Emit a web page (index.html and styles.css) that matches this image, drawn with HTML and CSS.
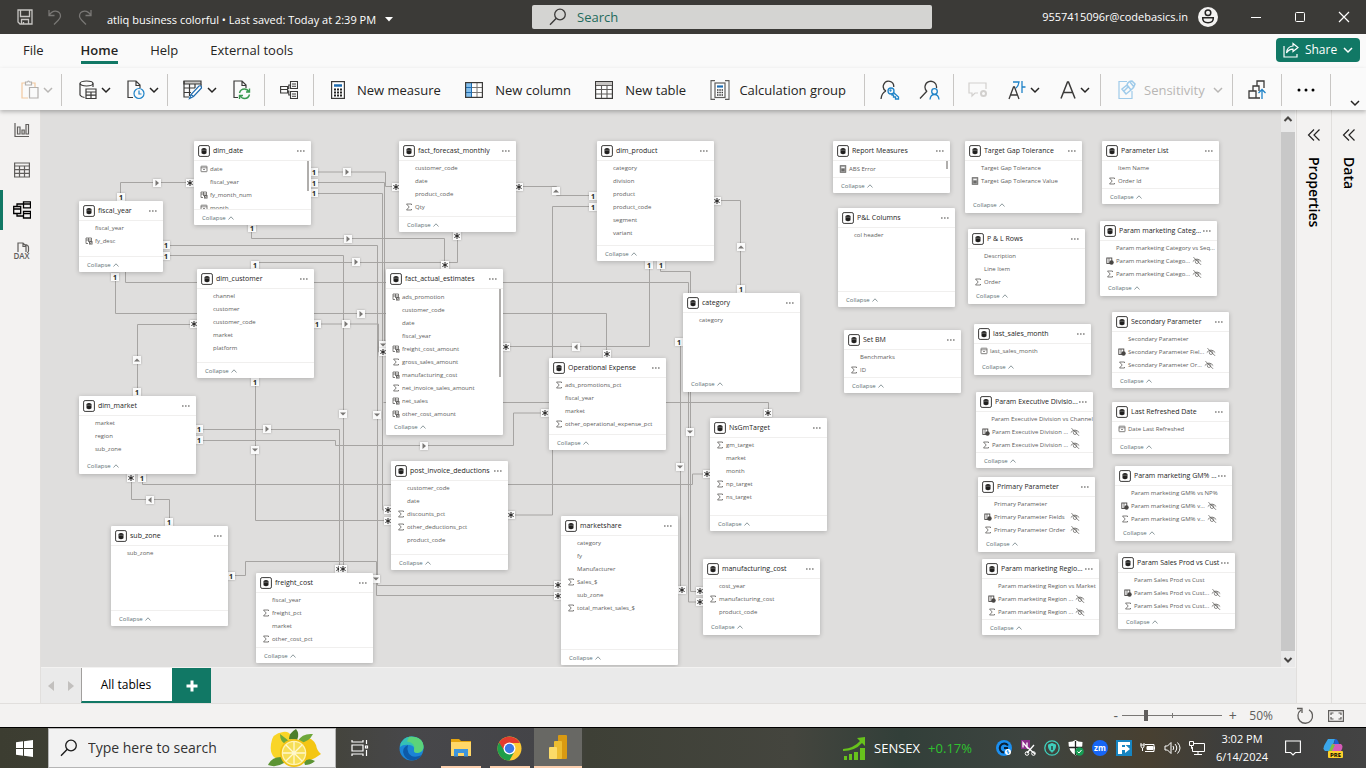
FILE: index.html
```html
<!DOCTYPE html>
<html lang="en">
<head>
<meta charset="utf-8">
<title>atliq business colorful</title>
<link rel="stylesheet" href="styles.css">
</head>
<body>
<svg class="defs" aria-hidden="true">
  <symbol id="chev" viewBox="0 0 10 10"><path d="M1 3l4 4 4-4" fill="none" stroke="currentColor" stroke-width="1.5"/></symbol>
  <symbol id="up" viewBox="0 0 6 6"><path d="M.5 4.500L3 1.800l2.500 2.700" fill="none" stroke="currentColor" stroke-width=".7"/></symbol>
  <symbol id="lens" viewBox="0 0 18 18"><circle cx="11" cy="6.500" r="5.300" fill="none" stroke="currentColor" stroke-width="1.300"/><path d="M7.300 10.300L1 16.700" stroke="currentColor" stroke-width="1.400"/></symbol>
  <symbol id="table" viewBox="0 0 12 12"><rect x=".6" y=".6" width="10.800" height="10.800" rx="1.500" fill="#fff" stroke="#3b3a39"/><path d="M3.500 4q2.500-2.200 5 0v4.300q-2.500 2-5 0z" fill="#201f1e"/><path d="M3.500 5.200h5" stroke="#999" stroke-width=".6"/></symbol>
  <symbol id="sum" viewBox="0 0 8 8"><path d="M6.500 2V1h-5l2.700 3-2.700 3h5V6" fill="none" stroke="#605e5c" stroke-width=".8"/></symbol>
  <symbol id="calc" viewBox="0 0 8 8"><path d="M1 1h5.500v3M1 1v5.500h2M1 3h5M3.500 1v4" fill="none" stroke="#605e5c" stroke-width=".8"/><path d="M4 4h3.500v3.500H4z" fill="#605e5c"/><path d="M4.800 4.800l2 2m0-2l-2 2" stroke="#fff" stroke-width=".5"/></symbol>
  <symbol id="field" viewBox="0 0 8 8"><rect x=".8" y="1" width="5" height="5.500" fill="none" stroke="#484644" stroke-width=".9"/><path d="M3 1v5" stroke="#484644" stroke-width=".7"/><circle cx="5.500" cy="5.500" r="2.200" fill="#484644"/></symbol>
  <symbol id="date" viewBox="0 0 8 8"><rect x="1" y="1.200" width="6" height="5.500" rx=".5" fill="none" stroke="#605e5c" stroke-width=".8"/><path d="M1 2.800h6M3 4.500h2" stroke="#605e5c" stroke-width=".7"/></symbol>
  <symbol id="measure" viewBox="0 0 8 8"><rect x="1.200" y=".7" width="5.600" height="6.600" fill="#aaa" stroke="#605e5c" stroke-width=".8"/><path d="M2.400 2.400h3.200" stroke="#fff"/><path d="M2.400 4.300h3.200M2.400 5.700h3.200" stroke="#484644" stroke-width=".8"/></symbol>
  <symbol id="eye" viewBox="0 0 10 8"><path d="M.8 4.500Q5-.3 9.200 4.500M1.500 .2l7.500 7.600" fill="none" stroke="#605e5c" stroke-width=".8"/><circle cx="5" cy="4.800" r="1.700" fill="none" stroke="#605e5c" stroke-width=".7"/></symbol>
</svg>

<header class="titlebar">
  <div class="quick">
    <button aria-label="Save"><svg width="16" height="16" viewBox="0 0 16 16" fill="none" stroke="#c8c6c4" stroke-width="1.300"><path d="M1 1h14v14H3L1 13zM3.500 1v6.500h9V1M4.500 15v-4.500h7V15M6.500 13v2"/></svg></button>
    <button aria-label="Undo"><svg width="16" height="16" viewBox="0 0 16 16" fill="none" stroke="#797775" stroke-width="1.300"><path d="M2 1v5.500h5.500M2.300 6Q5 2 8.500 2.200q5 .5 5 5Q13.500 9 11 11.500L7 15.500"/></svg></button>
    <button aria-label="Redo"><svg width="16" height="16" viewBox="0 0 16 16" fill="none" stroke="#797775" stroke-width="1.300"><path d="M14 1v5.500H8.500M13.700 6Q11 2 7.500 2.200q-5 .5-5 5Q2.500 9 5 11.500L9 15.500"/></svg></button>
    <button class="doc">atliq business colorful • Last saved: Today at 2:39 PM <svg width="10" height="6" viewBox="0 0 10 6"><path d="M1 0h8L5 4.500z" fill="#fff"/></svg></button>
  </div>
  <label class="search"><svg width="18" height="18"><use href="#lens"/></svg><input type="search" placeholder="Search" aria-label="Search"></label>
  <div class="account">
    <span>9557415096r@codebasics.in</span>
    <button aria-label="Account"><svg width="20" height="20" viewBox="0 0 20 20"><circle cx="10" cy="10" r="10" fill="#f3f2f1"/><circle cx="10" cy="5.700" r="2.800" fill="none" stroke="#252423" stroke-width="1.500"/><path d="M4.700 10.800h10.600q.3 5-5.300 5t-5.300-5z" fill="none" stroke="#252423" stroke-width="1.500"/></svg></button>
    <button aria-label="Minimize"><svg width="12" height="12"><path d="M1 6.500h10" stroke="#fff"/></svg></button>
    <button aria-label="Maximize"><svg width="12" height="12"><rect x="1.500" y="1.500" width="9" height="9" rx="1" fill="none" stroke="#fff"/></svg></button>
    <button aria-label="Close"><svg width="12" height="12"><path d="M1 1l10 10M11 1L1 11" stroke="#fff" stroke-width="1.200"/></svg></button>
  </div>
</header>

<nav class="menu">
  <a href="#">File</a><a href="#" class="current">Home</a><a href="#">Help</a><a href="#">External tools</a>
  <button class="share"><svg width="16" height="16" viewBox="0 0 16 16" fill="none" stroke="#fff" stroke-width="1.200"><path d="M1 4v11h13v-3M10 1.500l5 4-5 4V7.200Q6 7 3.500 11 4 4.500 10 4z"/></svg>Share<svg width="10" height="10"><use href="#chev"/></svg></button>
</nav>

<div class="ribbon">
  <div class="group g-paste"><button class="off" aria-label="Paste"><svg width="18" height="20" viewBox="0 0 18 20" fill="none" stroke-width="1.200"><path d="M7 18H1V3h3M11 3h3v4" stroke="#f2c9a0"/><path d="M4.500 2h2Q7.500 0 8.500 2h2v3h-6zM8.500 7.500H17V18H8.500z" stroke="#b3b0ad"/></svg><svg width="10" height="10"><use href="#chev"/></svg></button></div>
  <div class="group g-data">
    <button aria-label="Get data"><svg width="18" height="20" viewBox="0 0 18 20" fill="none" stroke="#3b3a39" stroke-width="1.200"><ellipse cx="7.500" cy="3.500" rx="6.500" ry="2.500"/><path d="M1 3.500V15q1 2 4.500 2.500M14 3.500V7M7 9h10v9.500H7zM7 12h10M12 12v6.500M7 15.200h10"/></svg><svg width="10" height="10"><use href="#chev"/></svg></button>
    <button aria-label="Recent sources"><svg width="18" height="20" viewBox="0 0 18 20" fill="none" stroke="#3b3a39" stroke-width="1.200"><path d="M6 17.500H1V1h8l4 4v3M9 1v4.500h4"/><circle cx="12" cy="13.500" r="5" stroke="#1f83c8"/><path d="M12 10.500v3.500h2.500" stroke="#1f83c8"/></svg><svg width="10" height="10"><use href="#chev"/></svg></button>
  </div>
  <div class="group g-query">
    <button aria-label="Transform data"><svg width="20" height="20" viewBox="0 0 20 20" fill="none" stroke="#3b3a39" stroke-width="1.200"><path d="M1 1h17v3H1z" fill="#c8c6c4"/><path d="M1 1v16h5M18 4v3M1 8h11M1 12.500h7M6.500 4v12M12 4v4"/><path d="M6.500 18.500l1.500-4 8-8.500q2.500-1 2.500 2l-8 8.500z" fill="#fff" stroke="#1f6cb0"/><path d="M8 14.500l2.500 2" stroke="#1f6cb0"/></svg><svg width="10" height="10"><use href="#chev"/></svg></button>
    <button aria-label="Refresh"><svg width="18" height="20" viewBox="0 0 18 20" fill="none" stroke="#3b3a39" stroke-width="1.200"><path d="M5 17.500H1V1h8l4 4v3M9 1v4.500h4"/><path d="M6.500 13q1-4 5-4 3 0 4.500 3M16.500 8.500V12H13M16.500 14.500q-1 4-5 4-3 0-4.500-3M6.500 19v-3.500H10" stroke="#3a9a50" stroke-width="1.400"/></svg></button>
  </div>
  <div class="group g-rel"><button aria-label="Manage relationships"><svg width="18" height="20" viewBox="0 0 18 20" fill="none" stroke="#3b3a39" stroke-width="1.100"><path d="M.6 6.500h7V13h-7zM.6 9.500h7M10.500 1.500h7v7h-7zM12 4h4M12 6.200h4M10.500 11.500h7v7h-7zM12 14h4M12 16.200h4M7.600 8.500h1.200V5h1.700M7.600 11h1.200v4h1.700"/></svg></button></div>
  <div class="group g-calc">
    <button><svg width="14" height="18" viewBox="0 0 14 18"><rect x=".6" y=".6" width="12.800" height="16.800" fill="#fff" stroke="#3b3a39" stroke-width="1.200"/><path d="M3 4.500h8" stroke="#1f6cb0" stroke-width="2.500"/><path d="M3 8.500h8M3 11.500h8M3 14.500h8" stroke="#252423" stroke-width="2" stroke-dasharray="2 1"/></svg>New measure</button>
    <button><svg width="18" height="16" viewBox="0 0 18 16"><rect x=".6" y=".6" width="16.800" height="14.800" fill="#fff"/><path d="M1 1h5.500v14H1z" fill="#83beec"/><path d="M12 1v14M6 5.500h11M6 10.500h11" stroke="#797775"/><path d="M1 5.500h5M1 10.500h5M6.500 1v14" stroke="#1f6cb0"/><rect x=".6" y=".6" width="16.800" height="14.800" fill="none" stroke="#3b3a39" stroke-width="1.200"/></svg>New column</button>
    <button><svg width="18" height="18" viewBox="0 0 18 18"><rect x=".6" y=".6" width="16.800" height="16.800" fill="#fff" stroke="#3b3a39" stroke-width="1.200"/><path d="M1 1h16v3H1z" fill="#c8c6c4"/><path d="M1 4.500h16M1 8.500h16M1 13h16M6.500 4v13M12 4v13" stroke="#605e5c" stroke-width="1.100"/></svg>New table</button>
    <button class="tight"><svg width="20" height="20" viewBox="0 0 20 20"><path d="M5 .6H1v18.800h4M15 .6h4v18.800h-4" fill="none" stroke="#605e5c" stroke-width="1.100"/><rect x="5" y="3" width="10" height="14.500" fill="#fff" stroke="#605e5c" stroke-width="1.200"/><path d="M7 6.500h6" stroke="#1f6cb0" stroke-width="2.200"/><path d="M7 10h6M7 12.500h6M7 15h6" stroke="#3b3a39" stroke-width="1.600" stroke-dasharray="1.500 .8"/></svg>Calculation group</button>
  </div>
  <div class="group g-sec">
    <button aria-label="Manage roles"><svg width="20" height="20" viewBox="0 0 20 20" fill="none" stroke="#3b3a39" stroke-width="1.300"><path d="M6 11A5.200 5.200 0 1 1 13.700 7M1 19q.5-6 5-8"/><g stroke="#1f83c8"><circle cx="11" cy="11" r="3"/><circle cx="10.500" cy="10.500" r=".5"/><path d="M13.500 12.500l5 4.500v2h-3v-2h-2v-2h-1.500v-1.500"/></g></svg></button>
    <button aria-label="View as"><svg width="21" height="20" viewBox="0 0 21 20" fill="none" stroke="#3b3a39" stroke-width="1.300"><path d="M8 11.500A5.800 5.800 0 1 1 17.500 8M8 11l-7 7.500"/><g stroke="#1f83c8"><circle cx="15.500" cy="11.500" r="2.800"/><path d="M11 19.500q.5-5 4.500-5t4.500 5"/></g></svg></button>
  </div>
  <div class="group g-lang">
    <button class="off" aria-label="Q and A setup"><svg width="20" height="18" viewBox="0 0 20 18" fill="none" stroke="#d2d0ce" stroke-width="1.200"><path d="M10 12H7l-3 3v-3H1V2h17v6"/><circle cx="15.500" cy="12.500" r="2.500" stroke-width="2"/></svg></button>
    <button aria-label="Language"><svg width="18" height="20" viewBox="0 0 18 20" fill="none" stroke="#3b3a39" stroke-width="1.300"><path d="M1 19L5.500 7h1L11 19M2.800 15h6.400"/><path d="M5 2h6q-.5 4-3 6M14 1v12M14 7h3.500" stroke="#1f83c8"/></svg><svg width="10" height="10"><use href="#chev"/></svg></button>
    <button aria-label="Linguistic schema"><svg width="16" height="20" viewBox="0 0 16 20" fill="none" stroke="#3b3a39" stroke-width="1.500"><path d="M1 18.500L7.500 2h1L15 18.500M3.500 12.500h9"/></svg><svg width="10" height="10"><use href="#chev"/></svg></button>
  </div>
  <div class="group g-sens"><button class="off"><svg width="18" height="20" viewBox="0 0 18 20" fill="none" stroke="#9fcbea" stroke-width="1.200"><path d="M9 1.500H1v17h13V11"/><path d="M4 9l5-4 4 5-5 4zM6 11l5-5M9 5q1-4 5-4l3 3q-1 4-4 6M12 2l4 5" stroke-width="1.500"/></svg>Sensitivity<svg width="10" height="10"><use href="#chev"/></svg></button></div>
  <div class="group g-pub"><button aria-label="Publish"><svg width="19" height="20" viewBox="0 0 19 20" fill="none" stroke="#3b3a39" stroke-width="1.300"><path d="M12 18H1v-7h7v7M5 11V6h6v5M9 6V1h7v7"/><path d="M14 19V10M10.500 13L14 9.500l3.500 3.500" stroke="#1f83c8"/></svg></button></div>
  <div class="group g-more"><button aria-label="More"><svg width="18" height="4"><circle cx="2" cy="2" r="1.500"/><circle cx="9" cy="2" r="1.500"/><circle cx="16" cy="2" r="1.500"/></svg></button></div>
  <button class="fold" aria-label="Ribbon options"><svg width="10" height="10"><use href="#chev"/></svg></button>
</div>

<main class="workspace">
  <nav class="rail">
    <a href="#" aria-label="Report view"><svg width="16" height="16" viewBox="0 0 16 16" fill="none" stroke="#605e5c" stroke-width="1.200"><path d="M1 1v13.500h14M3.500 5h2.500v7H3.500zM8 8h2.200v4H8zM12 2.500h2.500V12H12z"/></svg></a>
    <a href="#" aria-label="Table view"><svg width="16" height="16" viewBox="0 0 16 16" fill="none" stroke="#605e5c" stroke-width="1.200"><path d="M.6 1h14.800v14H.6zM.6 4h14.800M.6 7.600h14.800M.6 11.300h14.800M5.500 4v11M10.500 4v11"/></svg></a>
    <a href="#" class="current" aria-label="Model view"><svg width="18" height="18" viewBox="0 0 18 18" fill="none" stroke="#000" stroke-width="1.300"><path d="M.7 5.500h7v7h-7zM.7 8h7M10.500.8h7v6h-7zM10.500 3h7M10.500 10.500h7v6.500h-7zM10.500 12.700h7M4 5.500V3h6.500M4 12.500V15h6.500"/></svg></a>
    <a href="#" class="dax"><svg width="16" height="11" viewBox="0 0 16 11" fill="none" stroke="#605e5c" stroke-width="1.200"><path d="M4 10V1h5l3 3v6M9 1v3.500h3M11.500 2.500q3 .5 3 3V9q-.3 1.500-1.500 2"/></svg>DAX</a>
  </nav>

  <section class="model">
    <div class="canvas-row">
      <div class="canvas" id="canvas"></div>
      <div class="scroll"><svg width="10" height="10"><path d="M1.500 7L5 3.500 8.500 7" fill="none" stroke="#484644" stroke-width="2"/></svg><div class="scroll-thumb"></div><svg width="10" height="10"><path d="M1.500 3L5 6.500 8.500 3" fill="none" stroke="#484644" stroke-width="2"/></svg></div>
    </div>
    <div class="tabs">
      <button class="step" aria-label="Previous"><svg width="6" height="10"><path d="M6 0v10L0 5z" fill="#c2c0be"/></svg></button>
      <button class="step" aria-label="Next"><svg width="6" height="10"><path d="M0 0v10l6-5z" fill="#c2c0be"/></svg></button>
      <button class="tab">All tables</button>
      <button class="add" aria-label="New layout"><svg width="12" height="12"><path d="M6 .5v11M.5 6h11" stroke="#fff" stroke-width="3"/></svg></button>
    </div>
  </section>

  <button class="pane"><svg width="14" height="12" viewBox="0 0 14 12" fill="none" stroke="#252423" stroke-width="1.200"><path d="M7 .5L1.500 6 7 11.500M12.500.5L7 6l5.500 5.500"/></svg><span>Properties</span></button>
  <button class="pane"><svg width="14" height="12" viewBox="0 0 14 12" fill="none" stroke="#252423" stroke-width="1.200"><path d="M7 .5L1.500 6 7 11.500M12.500.5L7 6l5.500 5.500"/></svg><span>Data</span></button>
</main>

<footer class="status">
  <button class="sign" aria-label="Zoom out">-</button>
  <input type="range" min="10" max="190" value="50" aria-label="Zoom">
  <button class="sign" aria-label="Zoom in">+</button>
  <output>50%</output>
  <button aria-label="Reset zoom"><svg width="18" height="18" viewBox="0 0 18 18" fill="none" stroke="#605e5c" stroke-width="1.300"><path d="M5 3a7.300 7.300 0 1 0 8-.3M1 1.500h5V6"/></svg></button>
  <button aria-label="Fit to page"><svg width="16" height="12" viewBox="0 0 16 12" fill="none" stroke="#605e5c" stroke-width="1.200"><path d="M.6.6h14.800v10.800H.6zM3 5V3h2.500M10.500 3H13v2M13 7v2h-2.500M5.500 9H3V7"/></svg></button>
</footer>

<footer class="taskbar">
  <button class="start" aria-label="Start"><svg width="17" height="17" viewBox="0 0 17 17" fill="#fff"><path d="M0 2.300L7 1.300V8H0zM8 1.200L17 0v8H8zM0 9h7v6.700l-7-1zM8 9h9v8l-9-1.200z"/></svg></button>
  <label class="tasksearch"><svg width="18" height="18"><use href="#lens"/></svg><input type="search" placeholder="Type here to search" aria-label="Type here to search">
    <svg width="54" height="38" viewBox="0 0 54 38"><path d="M3 15Q4 4 15 3q6-1 8 4v18l-9 6Q1 30 3 15z" fill="#f9d528"/><path d="M31 10q12-5 17 6 1 6 5 9-3 2-6 4-8 5-16 1z" fill="#f4c613"/><path d="M21 10q0-6 7-10 4 5 1 11z" fill="#4c7f2c"/><path d="M12 5l9 7-3 3q-6-2-6-10zM30 12q4-8 15-7-4 8-13 9z" fill="#6ea83b"/><path d="M0 36q4-9 15-8l1 6q-8 5-16 2zM36 33q4-5 11-1-4 4-10 4z" fill="#5c9434"/><circle cx="26" cy="24" r="14" fill="#f2c315"/><circle cx="26" cy="24" r="12.300" fill="#fff4b5"/><circle cx="26" cy="24" r="11" fill="#f6de56"/><path d="M26 13v22M15 24h22M18 16l16 16M34 16L18 32" stroke="#fff8cf" stroke-width="1.300"/></svg></label>
  <button class="app wide" aria-label="Task view"><svg width="18" height="18" viewBox="0 0 18 18" fill="none" stroke="#fff" stroke-width="1.200"><path d="M1 1v2h11V1M1 6h11v6H1zM1 17v-2h11v2M15.500 1v4M15.500 11v6M14.500 7h2v2h-2z"/></svg></button>
  <button class="app" aria-label="Edge"><svg width="25" height="25" viewBox="0 0 25 25"><circle cx="12.500" cy="12.500" r="12" fill="#1b84d6"/><path d="M1 11Q2 1 12.500.5 24 1 24.500 11q0 5-6 6-4 0-3.500-3 1-4-4-5Q4 8 1 11z" fill="#35c1b5"/><path d="M10 .8Q24 0 24.500 11q0 5-6 6-4 0-3.500-3 2-7-7-8.500z" fill="#5bd37a"/><path d="M9 9q-7 3-4 10 3 6 10 5.300 5-1 7.500-5Q13 23 9.500 17q-2-4-.5-8z" fill="#0d5aa8"/></svg></button>
  <button class="app open" aria-label="File Explorer"><svg width="22" height="20" viewBox="0 0 22 20"><path d="M1 1h8l2 2h10v6H1z" fill="#e5a50f"/><path d="M1 4h20v14H1z" fill="#ffd768"/><path d="M4 18.500V11h14v7.500h-4V15H8v3.500z" fill="#3f96dd"/></svg></button>
  <button class="app open" aria-label="Chrome"><svg width="25" height="25" viewBox="0 0 25 25"><circle cx="12.500" cy="12.500" r="12" fill="#fcc934"/><path d="M12.500 12.500L2.100 6.500A12 12 0 0 0 12.500 24.500l5-9z" fill="#1e9e4a"/><path d="M2.100 6.500A12 12 0 0 1 23 7H12.500l-5 8z" fill="#e33b2e"/><circle cx="12.500" cy="12.500" r="6" fill="#fff"/><circle cx="12.500" cy="12.500" r="4.700" fill="#3b78e7"/></svg></button>
  <button class="app active" aria-label="Power BI"><svg width="18" height="24" viewBox="0 0 18 24"><rect x="9" width="9" height="24" rx="1" fill="#d99a12"/><rect x="5" y="6" width="8" height="18" rx="1" fill="#edbd31"/><rect y="12" width="8" height="12" rx="1" fill="#fbdb69"/></svg></button>
  <div class="tray">
    <button class="stock"><svg width="23" height="23" viewBox="0 0 23 23" fill="#67c21c"><path d="M0 12q11-1 17-8l-3-3L22 0v9l-3-3Q12 14 0 14zM1 19h3v4H1zM6 17h3v6H6zM11 15h4v8h-4zM17 11h5v12h-5z"/></svg><span>SENSEX</span><span class="gain">+0.17%</span></button>
    <button aria-label="Cloud sync"><svg width="16" height="16" viewBox="0 0 16 16"><circle cx="8" cy="8" r="8" fill="#1b8ff0"/><path d="M12 5.500A4.500 4.500 0 1 0 8 12.500M8 8h4" fill="none" stroke="#0b2036" stroke-width="2"/><circle cx="12" cy="12" r="3" fill="#fff"/><path d="M12 10l-1 2h2l-1 2" stroke="#1b8ff0" fill="none"/></svg></button>
    <button aria-label="Snipping"><svg width="16" height="16" viewBox="0 0 16 16"><path d="M1 0h9v9H1z" fill="#8b2c8a"/><path d="M3 7.500v-5l4 5v-5M7 7l8 7M14 5l-7 8" fill="none" stroke="#fff" stroke-width="1.300"/><circle cx="7" cy="13.500" r="1.800" fill="none" stroke="#fff"/><circle cx="13.500" cy="13.500" r="1.800" fill="none" stroke="#fff"/></svg></button>
    <button aria-label="VPN"><svg width="16" height="16" viewBox="0 0 16 16" fill="none" stroke="#3fd0bd"><circle cx="8" cy="8" r="7.200" stroke-width="1.300"/><path d="M8 3.500l3.500 1.300q.3 5-3.500 7.500-3.800-2.500-3.500-7.500z" fill="#3fd0bd"/><path d="M8 6v4" stroke="#28443f" stroke-width="1.500"/></svg></button>
    <button aria-label="Security"><svg width="16" height="16" viewBox="0 0 16 16"><path d="M7.500 0Q10 2 14.500 2 15 11 7.500 15.500 0 11 .5 2 5 2 7.500 0z" fill="#fff"/><path d="M7.500 1v14M1 7.500h13" stroke="#222" stroke-width="1.300"/><circle cx="11.500" cy="11.500" r="4.300" fill="#179c54"/><path d="M9.500 11.500l1.500 1.500 2.500-3" stroke="#fff" fill="none"/></svg></button>
    <button class="zm">zm</button>
    <button aria-label="FlashGet"><svg width="16" height="16" viewBox="0 0 16 16"><path d="M0 0h16v16H0z" fill="#1685c2"/><path d="M2 2h12v3H6v2h3V4.500L14 9l-5 4v-3H6v4H2z" fill="#fff"/></svg></button>
    <button aria-label="Battery"><svg width="16" height="16" viewBox="0 0 16 16" fill="none" stroke="#fff"><path d="M5 4.500h9v7H5M14.500 6.500v3"/><path d="M7 6.500h6v3H7z" fill="#fff"/><path d="M1 3v3q0 2 1.500 2T4 6V3M2.500 8v3M.5 5h4"/></svg></button>
    <button aria-label="Volume"><svg width="17" height="16" viewBox="0 0 17 16" fill="none" stroke="#fff"><path d="M1 6h2.500L7 2.500v11L3.500 10H1zM9 6q1.500 2 0 4M11 4q3.500 4 0 8M13.500 2.500q5 5.500 0 11"/></svg></button>
    <button aria-label="Network"><svg width="16" height="16" viewBox="0 0 16 16" fill="none" stroke="#fff"><path d="M5 3.500h10.500v8H3.500V7M5 14.500h8M9 11.500v3M.5 1.500h4v4h-4zM2.500 5.500v3h1"/></svg></button>
    <button class="clock"><span>3:02 PM</span><span>6/14/2024</span></button>
    <button class="note" aria-label="Notifications"><svg width="16" height="16" viewBox="0 0 16 16" fill="none" stroke="#fff" stroke-width="1.100"><path d="M.6 1h14.800v11.500h-5L8 15l-2.400-2.500h-5z"/></svg></button>
    <button class="pilot" aria-label="Copilot"><svg width="20" height="20" viewBox="0 0 20 20"><path d="M5 1h7l-4 12H2q-3-2 0-7z" fill="#3aa6ea"/><path d="M12 1q3 0 4 5h-5z" fill="#1c5fd6"/><path d="M9 6h9q3 2 0 7l-3 5H9z" fill="#d55bb8"/><path d="M9 6l3 1-4 8H5z" fill="#7bc043"/><rect x="5" y="13" width="15" height="7" rx="1" fill="#fdd02b"/><text x="12.500" y="18.800" font-size="6">PRE</text></svg></button>
  </div>
</footer>
<script src="model.js"></script>
</body>
</html>
```

FILE: styles.css
```css
* { box-sizing: border-box; }
body { margin: 0; height: 100vh; display: flex; flex-direction: column; overflow: hidden; font: 13px/20px "Open Sans", "Noto Sans", sans-serif; color: #252423; background: #fafafa; }
button { border: 0; padding: 0; background: none; font: inherit; color: inherit; display: flex; align-items: center; justify-content: center; white-space: nowrap; }
a { color: inherit; text-decoration: none; }
input { border: 0; outline: 0; background: none; font: inherit; min-width: 0; padding: 0; }
svg { flex: none; display: block; }
.defs { position: absolute; width: 0; height: 0; }

.titlebar { flex: none; height: 34px; display: grid; grid-template-columns: 1fr 400px 1fr; background: #3b3a37; color: #fff; font-size: 11px; }
.quick, .account { display: flex; align-items: center; }
.quick { padding-left: 17px; gap: 14px; }
.doc { gap: 8px; padding-top: 6px; }
.search { align-self: center; height: 24px; margin: 0 -49px 0 49px; display: flex; align-items: center; gap: 10px; padding-left: 17px; background: #d4d4d2; color: #3b3a39; border-radius: 2px; font-size: 13px; }
.search input { flex: 1; }
.search input::placeholder { color: #1f6b5c; opacity: 1; }
.account { justify-content: flex-end; gap: 32px; padding-right: 16px; }
.account span { margin-right: -22px; }

.menu { flex: none; height: 34px; display: flex; align-items: center; padding: 0 6px 2px 23px; gap: 32px; }
.menu a { padding: 4px 0 1px; border-bottom: 3px solid transparent; }
.menu a:first-child { margin-right: 5px; }
.menu .current { font-weight: 600; border-color: #117865; }
.share { margin-left: auto; width: 84px; height: 24px; gap: 6px; background: #117865; color: #fff; border-radius: 4px; font-size: 12px; }

.ribbon { flex: none; height: 42px; display: flex; align-items: center; padding: 0 6px 0 0; position: relative; z-index: 1; box-shadow: 0 2px 4px rgba(0, 0, 0, .25); background: #fafafa; }
.group { height: 32px; display: flex; align-items: center; border-right: 1px solid #c8c6c4; margin-top: 2px; flex: none; }
.group button { gap: 4px; }
.group .off { color: #b8b6b4; }
.g-paste { width: 62px; padding-left: 21px; }
.g-data { width: 106px; padding-left: 17px; gap: 16px; }
.g-query { width: 97px; padding-left: 15px; gap: 16px; }
.g-rel { width: 49px; padding-left: 15px; }
.g-calc { width: 551px; padding: 0 18px 0 17px; justify-content: space-between; }
.g-calc button { gap: 12px; }
.g-calc .tight { gap: 9px; }
.g-sec { width: 89px; padding-left: 15px; gap: 19px; }
.g-lang { width: 147px; padding-left: 14px; gap: 20px; }
.g-sens { width: 132px; padding-left: 17px; }
.g-sens button { gap: 8px; }
.g-pub { width: 49px; padding-left: 15px; }
.g-more { width: 49px; justify-content: center; }
.fold { margin: 0 0 2px auto; align-self: flex-end; height: 10px; }

.workspace { flex: 1; min-height: 0; display: flex; background: #f3f2f1; border-bottom: 1px solid #e1dfdd; }
.rail { width: 41px; flex: none; border-right: 1px solid #e1dfdd; }
.rail a { height: 40px; display: flex; align-items: center; justify-content: center; border-left: 3px solid transparent; }
.rail .current { border-color: #117865; }
.rail .dax { flex-direction: column; font-size: 8px; line-height: 6px; font-weight: 600; color: #605e5c; }
.model { flex: 1; min-width: 0; display: flex; flex-direction: column; }
.canvas-row { flex: 1; min-height: 0; display: flex; }
.canvas { flex: 1; position: relative; overflow: hidden; background: #dfdedd; }
.scroll { width: 15px; display: flex; flex-direction: column; align-items: center; gap: 8px; padding: 4px 0 2px; background: #e9e9e9; border-right: 1px solid #f3f2f1; }
.scroll svg:last-child { margin-top: -4px; }
.scroll-thumb { flex: 1; width: 100%; background: #c8c8c8; }
.tabs { flex: none; height: 36px; display: flex; background: #eaeaea; border-top: 1px solid #f3f2f1; }
.step { width: 20px; }
.tab { width: 91px; padding-right: 2px; background: #fff; border-left: 1px solid #a19f9d; border-bottom: 2px solid #117865; font-size: 12px; color: #000; }
.add { width: 39px; background: #117865; }
.pane { width: 35px; flex: none; flex-direction: column; justify-content: flex-start; gap: 16px; padding-top: 19px; border-left: 1px solid #e1dfdd; font-size: 14px; font-weight: 600; color: #000; }
.pane span { writing-mode: vertical-rl; }

.status { flex: none; height: 23px; display: flex; align-items: center; justify-content: flex-end; padding-right: 22px; background: #f3f2f1; color: #605e5c; font-size: 12px; }
.sign { width: 13px; font-size: 14px; }
.status input { appearance: none; width: 100px; height: 12px; margin: 0 4px 0 0; background: linear-gradient(#797775, #797775) 50% 50% / 1px 5px no-repeat, linear-gradient(#797775, #797775) 50% 50% / 100% 1px no-repeat; }
.status input::-webkit-slider-thumb { appearance: none; width: 4px; height: 11px; background: #605e5c; }
.status output { margin: 0 23px 0 10px; }
.status button + button { margin-left: 14px; }

.taskbar { flex: none; height: 41px; display: flex; border-top: 1px solid #000; color: #fff; background: linear-gradient(90deg, #3c3d31 0, #44443c 24%, #47474a 30%, #444448 40%, #3e4036 43%, #44453e 58%, #323f39 66%, #3d4440 75%, #484031 84%, #3d3e3d 90%, #434343 100%); }
.start { width: 48px; flex: none; }
.app { width: 49px; flex: none; }
.app.wide { width: 51px; padding-right: 3px; }
.app.open { background: linear-gradient(#fbcfae, #fbcfae) 50% 100% / 40px 2px no-repeat; }
.app.active { width: 48px; background: #686864; border-bottom: 2px solid #fbcfae; }
.tasksearch { width: 288px; display: flex; align-items: center; gap: 10px; padding: 0 13px 0 11px; background: #f2f2f2; border: 1px solid #b5b5b5; color: #1b1b1b; font-size: 14px; }
.tasksearch input { flex: 1; }
.tasksearch input::placeholder { color: #333; opacity: 1; }
.tray { margin-left: auto; display: flex; align-items: center; gap: 8px; padding-right: 23px; font-size: 11px; line-height: 18px; }
.stock { font-size: 13px; gap: 8px; margin-right: 16px; }
.gain { color: #2fc22f; }
.zm { width: 16px; height: 16px; border-radius: 50%; background: #1766f5; font-size: 8px; font-weight: 700; line-height: 8px; }
.clock { flex-direction: column; width: 58px; }
.note { margin-left: 6px; }
.pilot { margin-left: 14px; }
.pilot text { text-anchor: middle; font-weight: 700; fill: #000; }

.links { position: absolute; inset: 0; width: 100%; height: 100%; }
.links path { fill: none; stroke: #a6a4a2; stroke-width: 1; }
.links rect { fill: #fafafa; filter: drop-shadow(0 0 1px rgba(0, 0, 0, .25)); }
.links .arrow { fill: #797775; stroke: none; }
.links text { font-size: 7px; font-weight: 700; fill: #252423; text-anchor: middle; }
.links .many { stroke: #201f1e; }
.card { position: absolute; display: flex; flex-direction: column; background: #fff; border-radius: 1px; box-shadow: 0 1px 5px rgba(0, 0, 0, .22); color: #605e5c; font-size: 6px; line-height: 12px; }
.card header { flex: none; height: 20px; display: flex; align-items: center; padding: 0 6px 0 4px; gap: 3px; border-bottom: 1px solid #f0efee; color: #252423; }
.card h2 { flex: 1; min-width: 0; margin: 0; font-size: 7px; font-weight: 500; white-space: nowrap; }
.card ul { flex: 1; min-height: 0; margin: 0; padding: 0 0 0 6px; list-style: none; overflow: hidden; }
.card.scrolls ul { padding-top: 1px; }
.card li { height: 13px; display: flex; align-items: center; gap: 2px; white-space: nowrap; }
.card li::before { content: ""; width: 8px; }
.card li.has-icon::before { display: none; }
.card li.hidden span { min-width: 74px; }
.card footer { flex: none; height: 16px; padding: 0 8px; display: flex; align-items: center; color: #5c6f74; }
.card footer button { gap: 2px; }
.card.ruled footer { border-top: 1px solid #f0efee; }
.card .bar { position: absolute; right: 2px; top: 20px; width: 2px; background: #b0aeac; }
```

FILE: model.js
```js
// Part of the model plane that the 50% view shows.
const view = { x: 41, y: 110 };

// name, x, y, width, height, fields ("icon:name", trailing "!" = hidden field), options
const tables = [
  ["dim_date", 194, 141, 117, 84, ["date:date", "fiscal_year", "calc:fy_month_num", "date:month"], { ruled: 1, bar: 30 }],
  ["fiscal_year", 79, 201, 84, 71, ["fiscal_year", "calc:fy_desc"], { ruled: 1 }],
  ["dim_customer", 197, 269, 117, 109, ["channel", "customer", "customer_code", "market", "platform"], { ruled: 1 }],
  ["fact_forecast_monthly", 399, 141, 117, 91, ["customer_code", "date", "product_code", "sum:Qty"], { ruled: 1 }],
  ["dim_product", 597, 141, 117, 120, ["category", "division", "product", "product_code", "segment", "variant"], { ruled: 1 }],
  ["fact_actual_estimates", 386, 269, 117, 166, ["calc:ads_promotion", "customer_code", "date", "fiscal_year", "calc:freight_cost_amount", "sum:gross_sales_amount", "calc:manufacturing_cost", "sum:net_invoice_sales_amount", "calc:net_sales", "calc:other_cost_amount"], { bar: 88 }],
  ["category", 683, 293, 117, 99, ["category"], {}],
  ["Operational Expense", 549, 358, 117, 92, ["sum:ads_promotions_pct", "fiscal_year", "market", "sum:other_operational_expense_pct"], { ruled: 1 }],
  ["dim_market", 79, 396, 117, 78, ["market", "region", "sub_zone"], {}],
  ["sub_zone", 111, 526, 117, 100, ["sub_zone"], { ruled: 1 }],
  ["freight_cost", 256, 573, 117, 90, ["fiscal_year", "sum:freight_pct", "market", "sum:other_cost_pct"], { ruled: 1 }],
  ["post_invoice_deductions", 391, 461, 117, 109, ["customer_code", "date", "sum:discounts_pct", "sum:other_deductions_pct", "product_code"], { ruled: 1 }],
  ["marketshare", 561, 516, 117, 149, ["category", "fy", "Manufacturer", "sum:Sales_$", "sub_zone", "sum:total_market_sales_$"], { ruled: 1 }],
  ["NsGmTarget", 710, 418, 117, 113, ["sum:gm_target", "market", "month", "sum:np_target", "sum:ns_target"], { ruled: 1 }],
  ["manufacturing_cost", 703, 559, 117, 76, ["cost_year", "sum:manufacturing_cost", "product_code"], {}],
  ["Report Measures", 833, 141, 117, 52, ["measure:ABS Error"], { ruled: 1, bar: 8 }],
  ["P&L Columns", 838, 208, 117, 99, ["col header"], { ruled: 1 }],
  ["Set BM", 844, 330, 117, 63, ["Benchmarks", "sum:ID"], { ruled: 1 }],
  ["Target Gap Tolerance", 965, 141, 117, 72, ["Target Gap Tolerance", "measure:Target Gap Tolerance Value"], {}],
  ["P & L Rows", 968, 229, 117, 75, ["Description", "Line Item", "sum:Order"], {}],
  ["last_sales_month", 974, 324, 117, 51, ["date:last_sales_month"], {}],
  ["Parameter List", 1102, 141, 117, 63, ["Item Name", "sum:Order Id"], { ruled: 1 }],
  ["Param marketing Categ...", 1100, 221, 117, 75, ["Param marketing Category vs Seq...", "field:Param marketing Catego...!", "sum:Param marketing Catego...!"], {}],
  ["Secondary Parameter", 1112, 312, 117, 76, ["Secondary Parameter", "field:Secondary Parameter Fiel...!", "sum:Secondary Parameter Or...!"], { ruled: 1 }],
  ["Param Executive Divisio...", 976, 392, 117, 76, ["Param Executive Division vs Channel", "field:Param Executive Division ...!", "sum:Param Executive Division ...!"], { ruled: 1 }],
  ["Primary Parameter", 978, 477, 117, 75, ["Primary Parameter", "field:Primary Parameter Fields!", "sum:Primary Parameter Order!"], {}],
  ["Param marketing Regio...", 982, 559, 117, 76, ["Param marketing Region vs Market", "field:Param marketing Region ...!", "sum:Param marketing Region ...!"], { ruled: 1 }],
  ["Last Refreshed Date", 1112, 402, 117, 52, ["date:Date Last Refreshed"], { ruled: 1 }],
  ["Param marketing GM% ...", 1115, 466, 117, 75, ["Param marketing GM% vs NP%", "field:Param marketing GM% v...!", "sum:Param marketing GM% v...!"], {}],
  ["Param Sales Prod vs Cust", 1118, 553, 117, 76, ["Param Sales Prod vs Cust", "field:Param Sales Prod vs Cust...!", "sum:Param Sales Prod vs Cust...!"], { ruled: 1 }]
];

const paths = [
  "M120.5 198V182.500H190", "M314 172H385.500V186.500H396", "M314 182.500H384.500V352", "M314 193.500H382.500V510H388",
  "M251.500 226V238.500H444.500V265", "M166 245.500H377.500V585.500H558", "M166 255.500H343.500V569", "M115.500 273V313.500H606.500V353",
  "M125.500 272V282.500H688.500V602H700", "M255.500 262.500H457.500V236", "M317 324H378.500V352H383", "M193 324.500H137.500V391",
  "M255.500 382V520.500H388", "M199 429.500H339.500V569", "M199 440.500H335.500V445.500H513.500V413H545", "M142.500 478V484.500H692.500V474H707",
  "M131.500 478V499.500H169.500V522", "M231 575.500H245.500V561.500H376.500V595.500H558", "M519 186.500H556.500V195.500H593",
  "M593 206.500H552.500V515H511", "M649.500 265V346.500H507", "M660.500 265V271.500H690.500V591.500H700", "M716 200.500H740.500V288",
  "M680.500 342V590", "M383.500 402.500H768.500V412"
];

const arrows = [
  ["r", 157, 183], ["r", 347, 172], ["r", 348, 239], ["r", 356, 262], ["r", 361, 314], ["r", 346, 324], ["d", 383, 345],
  ["u", 137, 360], ["d", 343, 414], ["d", 377, 415], ["r", 267, 429], ["d", 255, 450], ["r", 424, 446], ["l", 150, 500],
  ["d", 376, 579], ["u", 556, 191], ["l", 576, 347], ["u", 741, 247], ["d", 690, 432], ["d", 680, 467]
];

const ends = [
  ["1", 121, 197], ["*", 190, 183], ["1", 314, 172], ["1", 314, 183], ["1", 314, 193], ["*", 396, 187], ["1", 252, 228],
  ["*", 445, 265], ["1", 166, 245], ["1", 166, 256], ["1", 115, 277], ["*", 607, 354], ["*", 700, 591], ["*", 700, 602],
  ["1", 255, 265], ["*", 457, 236], ["1", 317, 324], ["*", 383, 352], ["*", 194, 324], ["1", 137, 392], ["1", 255, 382],
  ["*", 388, 510], ["*", 388, 521], ["1", 199, 429], ["1", 199, 440], ["*", 339, 569], ["*", 343, 569], ["*", 545, 413],
  ["1", 142, 478], ["*", 131, 478], ["1", 169, 522], ["*", 707, 474], ["1", 231, 576], ["*", 558, 585], ["*", 558, 596],
  ["*", 519, 187], ["1", 593, 196], ["1", 593, 207], ["*", 511, 515], ["1", 649, 265], ["1", 661, 265], ["*", 506, 347],
  ["*", 717, 201], ["1", 741, 289], ["1", 679, 342], ["*", 682, 590], ["*", 768, 413]
];

const shapes = { r: "M-1.500-3L2 0-1.500 3z", l: "M1.500-3L-2 0 1.500 3z", u: "M-3 1.500L0-1.500 3 1.500z", d: "M-3-1.500L0 1.500 3-1.500z" };
const star = "M0-3V3M-2.600-1.500L2.600 1.500M-2.600 1.500L2.600-1.500";
const box = '<rect x="-4" y="-4" width="8" height="8"/>';
const esc = s => s.replace(/&/g, "&amp;");
const icon = (id, w, h) => `<svg width="${w}" height="${h}"><use href="#${id}"/></svg>`;

function field(text) {
  const hidden = text.endsWith("!");
  const [name, kind] = text.replace("!", "").split(":").reverse();
  return `<li class="${kind ? "has-icon" : ""} ${hidden ? "hidden" : ""}">${kind ? icon(kind, 8, 8) : ""}<span>${esc(name)}</span>${hidden ? icon("eye", 10, 8) : ""}</li>`;
}

function card([name, x, y, w, h, fields, opt]) {
  const cls = ["card", opt.ruled && "ruled", opt.bar && "scrolls"].filter(Boolean).join(" ");
  return `<article class="${cls}" style="left:${x - view.x}px;top:${y - view.y}px;width:${w}px;height:${h}px">
    <header>${icon("table", 12, 12)}<h2>${esc(name)}</h2><svg width="8" height="2"><path d="M0 1h8" stroke="#484644" stroke-width="1.200" stroke-dasharray="1.600 1.400"/></svg></header>
    <ul>${fields.map(field).join("")}</ul>
    <footer><button>Collapse ${icon("up", 6, 6)}</button></footer>
    ${opt.bar ? `<i class="bar" style="height:${opt.bar}px"></i>` : ""}</article>`;
}

const at = (x, y, body) => `<g transform="translate(${x} ${y})">${box}${body}</g>`;
document.getElementById("canvas").innerHTML =
  `<svg class="links"><g transform="translate(${-view.x} ${-view.y})">
    ${paths.map(d => `<path d="${d}"/>`).join("")}
    ${arrows.map(([k, x, y]) => at(x, y, `<path class="arrow" d="${shapes[k]}"/>`)).join("")}
    ${ends.map(([k, x, y]) => at(x, y, k === "1" ? '<text y="3">1</text>' : `<path class="many" d="${star}"/>`)).join("")}
  </g></svg>` + tables.map(card).join("");
```
